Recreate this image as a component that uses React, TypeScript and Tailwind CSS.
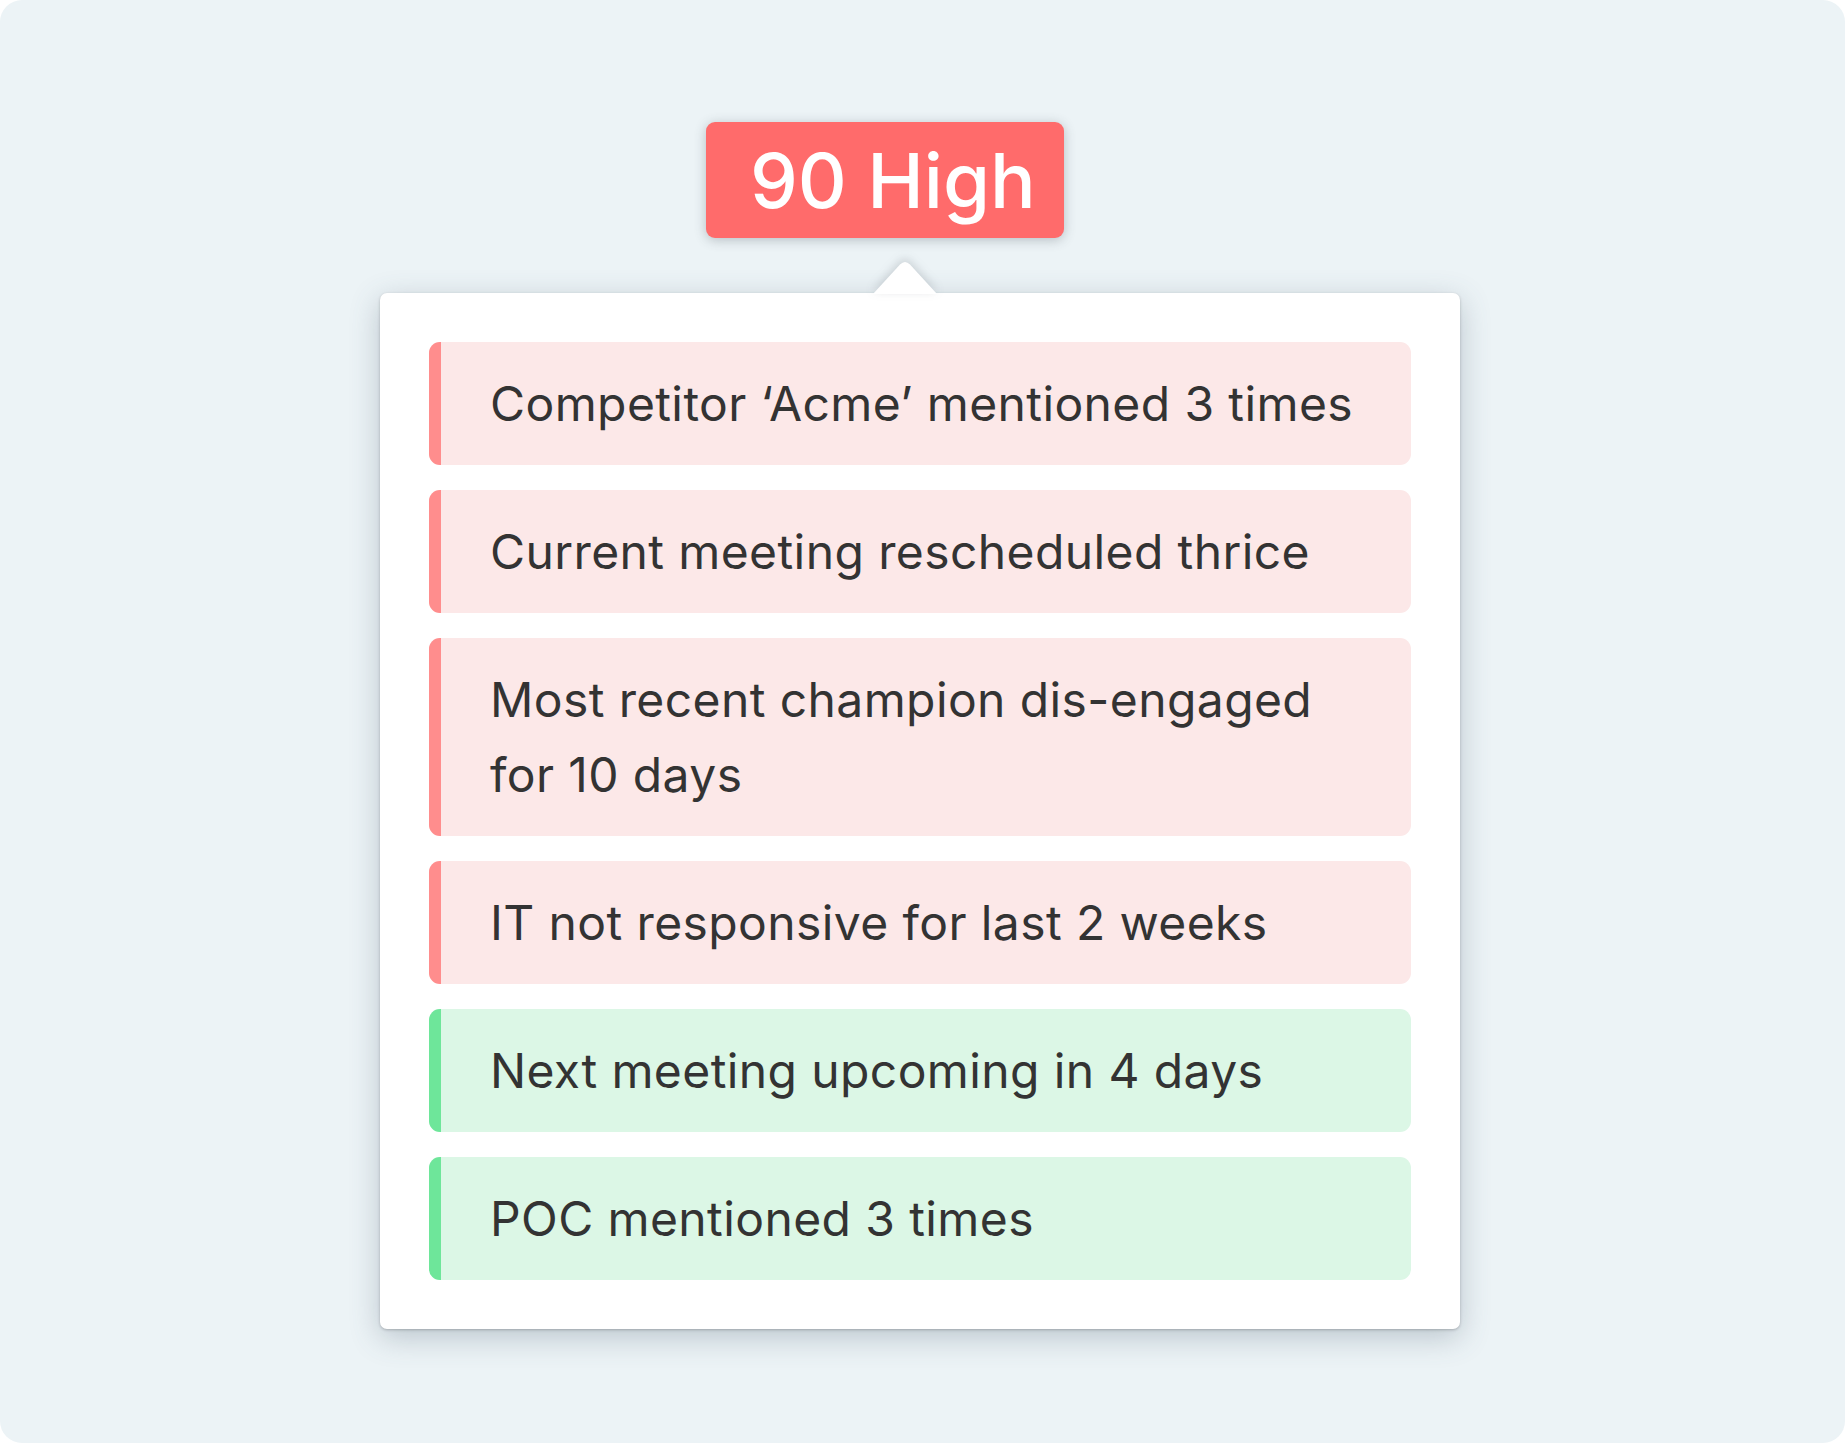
const items = [
  { text: "Competitor ‘Acme’ mentioned 3 times", tone: "bad" },
  { text: "Current meeting rescheduled thrice", tone: "bad" },
  { text: "Most recent champion dis-engaged for 10 days", tone: "bad" },
  { text: "IT not responsive for last 2 weeks", tone: "bad" },
  { text: "Next meeting upcoming in 4 days", tone: "good" },
  { text: "POC mentioned 3 times", tone: "good" },
]

function Signal({ text, tone }: { text: string; tone: string }) {
  const good = tone === "good"
  return (
    <li
      className={
        "flex overflow-hidden rounded-[11px] " +
        (good ? "bg-[#dcf7e6]" : "bg-[#fce8e8]")
      }
    >
      <span className={"w-[12px] shrink-0 " + (good ? "bg-[#6ee69a]" : "bg-[#ff8d8d]")} />
      <p className="py-[24px] pl-[49px] pr-[49px] text-[48px] leading-[75px] tracking-[0.4px] text-[#333]">
        {text}
      </p>
    </li>
  )
}

export default function App() {
  return (
    <main
      className="w-full h-[1443px] bg-[#ecf3f6] rounded-[22px] pt-[122px] font-['Inter','Noto_Sans',sans-serif]"
    >
      <div className="w-[1080px] ml-[380px] flex flex-col">
        <div className="ml-[326px] w-[358px] h-[116px] rounded-[9px] bg-[#ff6b6b] shadow-[0_2px_12px_rgba(60,70,80,0.3)] flex items-center pl-[44px]">
          <span className="text-[76px] font-medium leading-none text-white">90 High</span>
        </div>

        <div className="relative mt-[55px] bg-white rounded-[7px] p-[49px] shadow-[0_1px_3px_rgba(0,0,0,0.22),0_8px_30px_rgba(70,90,110,0.3)]">
          <svg
            className="absolute left-[493px] top-[-33px] drop-shadow-[0_-3px_5px_rgba(60,70,80,0.2)]"
            width="64"
            height="34"
            viewBox="0 0 64 34"
          >
            <path d="M0 34 L27 4.5 Q32 -0.5 37 4.5 L64 34 Z" fill="#fff" />
          </svg>
          <ul className="flex flex-col gap-[25px]">
            {items.map((it) => (
              <Signal key={it.text} text={it.text} tone={it.tone} />
            ))}
          </ul>
        </div>
      </div>
    </main>
  )
}
